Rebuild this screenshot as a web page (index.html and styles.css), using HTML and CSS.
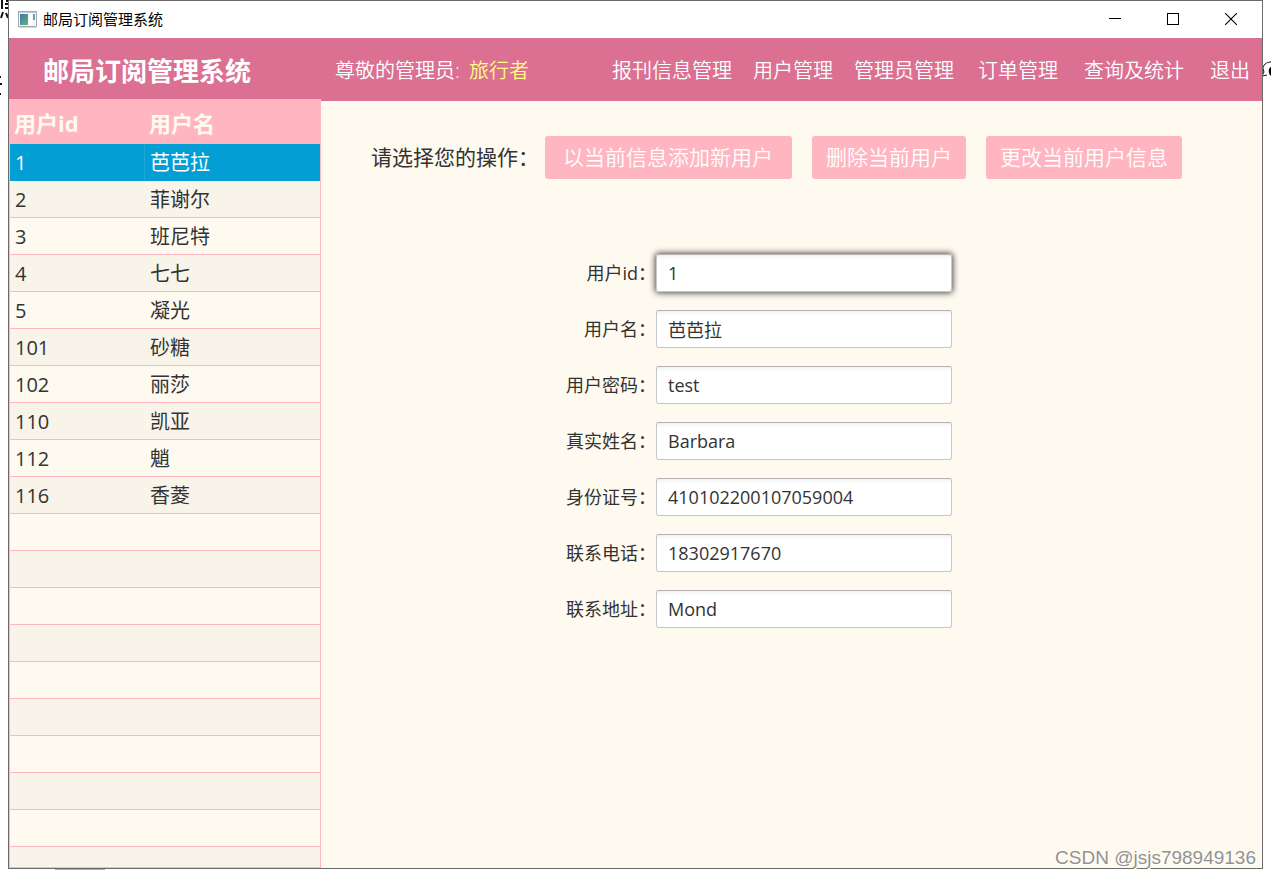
FILE: index.html
```html
<!DOCTYPE html>
<html lang="zh-CN">
<head>
<meta charset="utf-8">
<title>邮局订阅管理系统</title>
<link rel="stylesheet" href="styles.css">
</head>
<body>
<svg class="scrap scrap-left" width="8" height="100" aria-hidden="true">
  <path d="M2 0V9M6 1H8M5 4H8M5 8H8M3 12L1 18M6 13L8 18M0 77H1M0 84H2M0 94H1" stroke="#111" stroke-width="2" fill="none"/>
</svg>
<svg class="scrap scrap-right" width="9" height="20" aria-hidden="true">
  <path d="M9 2C4 2 1 5 1 9L2 12L0 16L5 15" stroke="#111" stroke-width="1" fill="none"/>
  <path d="M9 7C6 8 6 14 9 16Z" fill="#000"/>
</svg>
<svg class="scrap scrap-bottom" width="50" height="2" aria-hidden="true"><path d="M0 1H50" stroke="#aaa" stroke-width="2"/></svg>

<div class="window">
  <div class="titlebar">
    <svg class="app-icon" width="19" height="17" viewBox="0 0 19 17" aria-hidden="true">
      <defs><linearGradient id="pane" x1="0" y1="0" x2="1" y2="1"><stop offset="0" stop-color="#3f78a8"/><stop offset="1" stop-color="#5fb57d"/></linearGradient></defs>
      <rect x="0.500" y="0.500" width="18" height="15" fill="#f4f6f7" stroke="#a3abb1"/>
      <path d="M1 1.500H18" stroke="#c7cfd6"/>
      <rect x="2" y="3" width="8" height="11" fill="url(#pane)"/>
      <rect x="11" y="3" width="3" height="11" fill="#fff"/>
      <rect x="15" y="3" width="2" height="6" fill="#66a7ae"/>
      <path d="M1 16.500H18" stroke="#d5d8da"/>
    </svg>
    <span class="titlebar-text">邮局订阅管理系统</span>
    <button class="win-button" type="button" aria-label="最小化"><svg width="12" height="12"><path d="M0 5.500H12" stroke="#000"/></svg></button>
    <button class="win-button" type="button" aria-label="最大化"><svg width="12" height="12"><rect x="0.500" y="0.500" width="11" height="11" fill="none" stroke="#000"/></svg></button>
    <button class="win-button" type="button" aria-label="关闭"><svg width="12" height="12"><path d="M0 0L12 12M12 0L0 12" stroke="#000" stroke-width="1.100"/></svg></button>
  </div>

  <header class="header">
    <h1 class="brand">邮局订阅管理系统</h1>
    <p class="greeting">尊敬的管理员: <span class="admin">旅行者</span></p>
    <nav class="nav">
      <div class="nav-group">
        <a href="#papers">报刊信息管理</a>
        <a href="#users">用户管理</a>
        <a href="#admins">管理员管理</a>
      </div>
      <div class="nav-group nav-group-wide">
        <a href="#orders">订单管理</a>
        <a href="#stats">查询及统计</a>
        <a href="#logout">退出</a>
      </div>
    </nav>
  </header>

  <div class="content">
    <aside class="sidebar">
      <table class="users">
        <thead><tr><th class="col-id" scope="col">用户id</th><th scope="col">用户名</th></tr></thead>
        <tbody>
          <tr class="selected"><td>1</td><td>芭芭拉</td></tr>
          <tr><td>2</td><td>菲谢尔</td></tr>
          <tr><td>3</td><td>班尼特</td></tr>
          <tr><td>4</td><td>七七</td></tr>
          <tr><td>5</td><td>凝光</td></tr>
          <tr><td>101</td><td>砂糖</td></tr>
          <tr><td>102</td><td>丽莎</td></tr>
          <tr><td>110</td><td>凯亚</td></tr>
          <tr><td>112</td><td>魈</td></tr>
          <tr><td>116</td><td>香菱</td></tr>
          <tr><td></td><td></td></tr>
          <tr><td></td><td></td></tr>
          <tr><td></td><td></td></tr>
          <tr><td></td><td></td></tr>
          <tr><td></td><td></td></tr>
          <tr><td></td><td></td></tr>
          <tr><td></td><td></td></tr>
          <tr><td></td><td></td></tr>
          <tr><td></td><td></td></tr>
          <tr><td></td><td></td></tr>
        </tbody>
      </table>
    </aside>

    <main class="main">
      <div class="actions">
        <span class="actions-label">请选择您的操作：</span>
        <div class="action-buttons">
          <button class="action action-wide" type="button">以当前信息添加新用户</button>
          <button class="action" type="button">删除当前用户</button>
          <button class="action" type="button">更改当前用户信息</button>
        </div>
      </div>
      <form class="form">
        <label for="uid">用户id：</label><input class="active" id="uid" type="text" value="1">
        <label for="uname">用户名：</label><input id="uname" type="text" value="芭芭拉">
        <label for="pwd">用户密码：</label><input id="pwd" type="text" value="test">
        <label for="real">真实姓名：</label><input id="real" type="text" value="Barbara">
        <label for="idno">身份证号：</label><input id="idno" type="text" value="410102200107059004">
        <label for="tel">联系电话：</label><input id="tel" type="text" value="18302917670">
        <label for="addr">联系地址：</label><input id="addr" type="text" value="Mond">
      </form>
      <span class="watermark">CSDN @jsjs798949136</span>
    </main>
  </div>
</div>
</body>
</html>
```
FILE: styles.css
```css
* { box-sizing: border-box; }

body {
  margin: 0;
  padding: 0 8px 8px;
  height: 100vh;
  background: #fff;
  color: #333;
  font-family: "Open Sans", "Noto Sans CJK SC", sans-serif;
  overflow: hidden;
}

button, input { font-family: inherit; }

/* fragments of the page lying behind the window */
.scrap { position: absolute; }
.scrap-left { left: 0; top: 0; }
.scrap-right { right: 0; top: 60px; }
.scrap-bottom { left: 55px; bottom: 7px; }

.window {
  position: relative;
  display: flex;
  flex-direction: column;
  height: 100%;
  border: 1px solid #6b6b6b;
  background: #fffaf0;
}

.titlebar {
  display: flex;
  align-items: center;
  flex: none;
  height: 37px;
  padding: 0 2px 1px 9px;
  background: #fff;
  color: #000;
}
.titlebar-text {
  flex: 1;
  margin-left: 6px;
  font-size: 15px;
  line-height: 20px;
}
.win-button {
  display: flex;
  align-items: center;
  justify-content: center;
  width: 58px;
  height: 36px;
  padding: 0;
  border: 0;
  background: none;
}

.header {
  display: flex;
  align-items: center;
  flex: none;
  height: 63px;
  padding: 2px 12px 0 34px;
  background: #db7093;
  color: #fff;
}
.brand {
  width: 292px;
  margin: 0;
  font-size: 26px;
  line-height: 36px;
}
.greeting {
  flex: 1;
  margin: 0;
  font-size: 20px;
  font-weight: 350;
  line-height: 28px;
}
.admin { margin-left: 4px; color: #ffff80; }
.nav { display: flex; gap: 24px; }
.nav-group { display: flex; gap: 21px; }
.nav-group-wide { gap: 26px; }
.nav a {
  color: #fff;
  font-size: 20px;
  font-weight: 350;
  line-height: 28px;
  text-decoration: none;
}

.content {
  display: flex;
  flex: 1;
  min-height: 0;
}

.sidebar {
  flex: none;
  width: 312px;
  margin-top: -2px;
  border: 1px solid #ffb6c1;
  overflow: hidden;
}
.users {
  width: 100%;
  table-layout: fixed;
  border-collapse: separate;
  border-spacing: 0;
  font-size: 20px;
  line-height: 28px;
}
.users th {
  height: 44px;
  padding: 2px 5px 0 4px;
  background: #ffb6c1;
  color: #fffaf0;
  font-size: 22px;
  text-align: left;
}
.users .col-id { width: 135px; }
.users td {
  height: 37px;
  padding: 2px 5px 0;
  border-bottom: 1px solid #ffb6c1;
}
.users tbody tr:nth-child(even) { background: #f9f4ea; }
.users .selected td {
  border-bottom-color: #039ed3;
  background: #039ed3;
  color: #fff;
}
.users .selected td:first-child { border-right: 1px solid #20a8d8; }

.main {
  flex: 1;
  min-width: 0;
  padding: 35px 0 0 50px;
}
.actions {
  display: flex;
  align-items: center;
  gap: 6px;
}
.actions-label {
  padding-bottom: 2px;
  font-size: 21px;
  line-height: 30px;
}
.action-buttons { display: flex; gap: 20px; }
.action {
  height: 43px;
  padding: 0 14px 2px;
  border: 0;
  border-radius: 3px;
  background: #ffb6c1;
  color: #fff;
  font-size: 21px;
  font-weight: 350;
  line-height: 30px;
}
.action-wide { padding: 0 19px 2px 18px; }

.form {
  display: grid;
  grid-template-columns: 285px 296px;
  row-gap: 18px;
  align-items: center;
  margin-top: 75px;
  font-size: 18px;
}
.form label {
  line-height: 26px;
  text-align: right;
}
.form input {
  width: 100%;
  height: 38px;
  padding: 0 11px;
  border: 1px solid #c8c8cb;
  border-top-color: #b4b4b4;
  border-radius: 3px;
  background: linear-gradient(#f2f2f2, #fff 5px);
  color: #333;
  font-size: 18px;
  outline: 0;
}
.form .active { box-shadow: 0 0 6px 1px rgba(0, 0, 0, 0.7); }

.watermark {
  position: absolute;
  right: 6px;
  bottom: 0;
  color: #929292;
  font-family: "Liberation Sans", sans-serif;
  font-size: 19px;
  line-height: 20px;
  text-shadow: 1px 1px 0 #fff;
}
```
